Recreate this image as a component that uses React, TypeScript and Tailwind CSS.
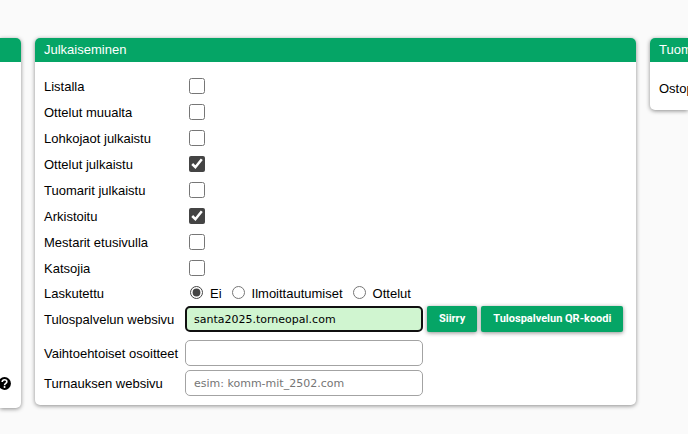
import React, { useState } from "react"

type CheckRow = {
    id: string
    label: string
    checked: boolean
}

const initialRows: CheckRow[] = [
    { id: "listalla", label: "Listalla", checked: false },
    { id: "muualta", label: "Ottelut muualta", checked: false },
    { id: "lohkojaot", label: "Lohkojaot julkaistu", checked: false },
    { id: "ottelut", label: "Ottelut julkaistu", checked: true },
    { id: "tuomarit", label: "Tuomarit julkaistu", checked: false },
    { id: "arkistoitu", label: "Arkistoitu", checked: true },
    { id: "mestarit", label: "Mestarit etusivulla", checked: false },
    { id: "katsojia", label: "Katsojia", checked: false },
]

const billingOptions = ["Ei", "Ilmoittautumiset", "Ottelut"]

const cardClass = "bg-white shadow-[0_1px_4px_rgba(0,0,0,0.45)]"
const headerClass = "h-6 whitespace-nowrap bg-[#05a566] px-[9px] leading-6 text-white"
const labelClass = "w-[141px] shrink-0 whitespace-nowrap pt-[2px]"
const inputClass = "h-[26px] w-[238px] shrink-0 rounded-[5px] border border-[#a3a3a3] bg-white px-2 font-['DejaVu_Sans',sans-serif] text-[11px] text-black placeholder:text-[#757575]"
const buttonClass = "h-[26px] shrink-0 whitespace-nowrap rounded-[2px] bg-[#05a566] px-3 font-[Roboto,sans-serif] text-[11px] font-bold text-white shadow-[0_1px_4px_rgba(0,0,0,0.45)]"

const HelpIcon = () => (
    <svg viewBox="0 0 512 512" className="size-[13px] shrink-0" aria-hidden="true">
        <circle cx="256" cy="256" r="254" fill="black" />
        <path
            d="M164 196c4-60 42-90 92-90 58 0 92 34 92 78 0 68-90 66-90 136"
            fill="none"
            stroke="white"
            strokeWidth="64"
        />
        <circle cx="258" cy="392" r="40" fill="white" />
    </svg>
)

const PublishCard = () => {
    const [rows, setRows] = useState<CheckRow[]>(initialRows)
    const [billing, setBilling] = useState<string>("Ei")
    const [site, setSite] = useState<string>("santa2025.torneopal.com")

    const toggleRow = (id: string) => {
        setRows(rows.map((row) => (row.id === id ? { ...row, checked: !row.checked } : row)))
    }

    return (
        <section className={`min-w-0 flex-1 rounded-[5px] ${cardClass}`}>
            <h2 className={`rounded-t-[5px] ${headerClass}`}>Julkaiseminen</h2>
            <form className="px-[9px] pt-[11px] pb-[9px]" onSubmit={(e) => e.preventDefault()}>
                {rows.map((row) => (
                    <div key={row.id} className="flex h-[26px] items-center">
                        <label htmlFor={row.id} className={labelClass}>{row.label}</label>
                        <input
                            id={row.id}
                            type="checkbox"
                            checked={row.checked}
                            onChange={() => toggleRow(row.id)}
                            className="ml-1 size-4 accent-[#444444]"
                        />
                    </div>
                ))}

                <div role="radiogroup" aria-labelledby="laskutettu" className="flex h-6 items-center">
                    <span id="laskutettu" className={labelClass}>Laskutettu</span>
                    <div className="ml-[5px] flex gap-[10px]">
                        {billingOptions.map((option) => (
                            <label key={option} className="flex gap-[7px] whitespace-nowrap pt-[2px]">
                                <input
                                    type="radio"
                                    name="billing"
                                    value={option}
                                    checked={billing === option}
                                    onChange={() => setBilling(option)}
                                    className="size-[13px] accent-[#444444]"
                                />
                                {option}
                            </label>
                        ))}
                    </div>
                </div>

                <div className="flex h-7 items-center">
                    <label htmlFor="site" className={labelClass}>Tulospalvelun websivu</label>
                    <input
                        id="site"
                        type="text"
                        value={site}
                        onChange={(e) => setSite(e.target.value)}
                        className="h-[26px] w-[238px] shrink-0 rounded-[5px] border-2 border-[#101010] bg-[#d0f5d0] px-[7px] font-['DejaVu_Sans',sans-serif] text-[11px] text-black outline-none"
                    />
                    <button type="button" className={`ml-1 ${buttonClass}`}>Siirry</button>
                    <button type="button" className={`ml-1 ${buttonClass}`}>Tulospalvelun QR-koodi</button>
                </div>

                <div className="mt-[7px] flex flex-col gap-1">
                    <div className="flex items-center">
                        <label htmlFor="alternatives" className={labelClass}>Vaihtoehtoiset osoitteet</label>
                        <input id="alternatives" type="text" className={inputClass} />
                    </div>
                    <div className="flex items-center">
                        <label htmlFor="homepage" className={labelClass}>Turnauksen websivu</label>
                        <input id="homepage" type="text" placeholder="esim: komm-mit_2502.com" className={inputClass} />
                    </div>
                </div>
            </form>
        </section>
    )
}

const App = () => {
    return (
        <main className="flex min-h-screen items-start gap-[14px] overflow-hidden bg-[#fafafa] pt-[38px] font-['Liberation_Sans',Arial,sans-serif] text-[13px] leading-4 text-black">
            <section className={`w-[21px] shrink-0 rounded-r-[5px] ${cardClass}`}>
                <div className={`rounded-tr-[5px] ${headerClass}`} />
                <div className="flex h-[346px] items-end justify-end pr-[10px] pb-[18px]">
                    <button type="button" aria-label="Ohje">
                        <HelpIcon />
                    </button>
                </div>
            </section>
            <PublishCard />
            <section className={`w-[38px] shrink-0 rounded-l-[5px] ${cardClass}`}>
                <h2 className={`rounded-tl-[5px] ${headerClass}`}>Tuom</h2>
                <p className="whitespace-nowrap pt-[19px] pb-[13px] pl-[9px]">Ostop</p>
            </section>
        </main>
    )
}

export default App
